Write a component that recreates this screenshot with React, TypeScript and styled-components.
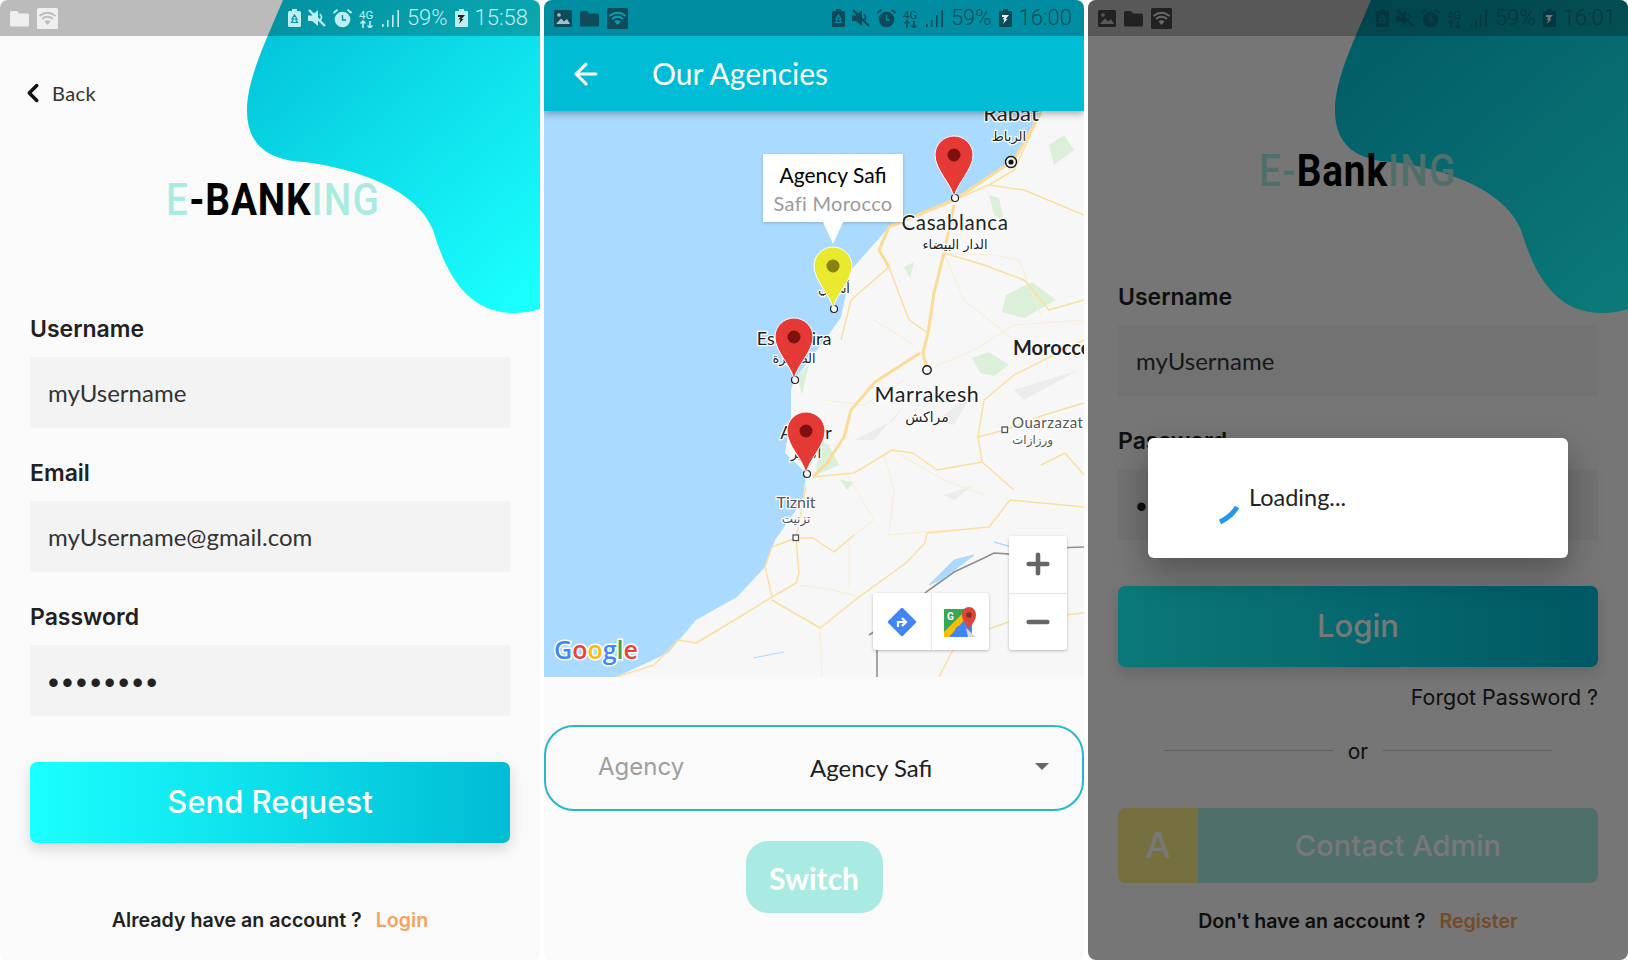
import { ChevronLeft, ArrowLeft, Plus, Minus } from "lucide-react";
import styled, { createGlobalStyle } from "styled-components";

const wideFont = `"Inter", "Open Sans", sans-serif`;
const bodyFont = `"Lato", "Noto Sans", sans-serif`;

const GlobalStyle = createGlobalStyle`
  html, body {
    margin: 0;
    background: #fff;
  }
  * {
    box-sizing: border-box;
  }
`;

const Page = styled.div`
  display: flex;
  gap: 4px;
  width: 1628px;
  height: 960px;
  overflow: hidden;
`;

const Phone = styled.section`
  position: relative;
  display: flex;
  flex-direction: column;
  width: 540px;
  height: 960px;
  flex: none;
  overflow: hidden;
  border-radius: 8px;
  background: #fafafa;
  color: #212121;
`;

const BlobArt = styled.svg`
  position: absolute;
  top: 0;
  left: 0;
`;

const Bar = styled.div<{ $fg: string; $bg?: string }>`
  position: relative;
  z-index: 2;
  display: flex;
  align-items: center;
  justify-content: space-between;
  height: 36px;
  flex: none;
  padding: 0 12px 0 10px;
  background: ${({ $bg }) => $bg || "rgba(0, 0, 0, 0.25)"};
  color: ${({ $fg }) => $fg};
`;

const BarGroup = styled.div<{ $fg: string }>`
  display: flex;
  align-items: center;
  gap: 8px;
  color: ${({ $fg }) => $fg};
`;

const BarRight = styled.div`
  display: flex;
  align-items: center;
  gap: 7px;
`;

const BarText = styled.span`
  font: 300 22px/36px "Roboto", sans-serif;
  white-space: nowrap;
`;

const Content = styled.div`
  position: relative;
  z-index: 1;
  display: flex;
  flex-direction: column;
  padding: 0 30px;
`;

const BackRow = styled.div`
  display: flex;
  align-items: center;
  gap: 4px;
  height: 40px;
  margin: 37px 0 0 -12px;
  font: 400 20px/40px "Lato", sans-serif;
  letter-spacing: 0.4px;
  color: #333;
`;

const Logo = styled.h1<{ $top: number; $shift: number }>`
  height: 50px;
  margin: ${({ $top }) => $top}px 0 0 ${({ $shift }) => $shift}px;
  font: 500 44px/50px "Roboto", sans-serif;
  letter-spacing: 1.5px;
  color: #a9ebe2;
  white-space: nowrap;
  transform: scaleX(0.88);
  transform-origin: left center;
`;

const LogoInk = styled.span`
  color: #000;
  font-weight: 700;
  letter-spacing: 1px;
`;

const Field = styled.div<{ $top: number }>`
  display: flex;
  flex-direction: column;
  gap: 14px;
  margin-top: ${({ $top }) => $top}px;
`;

const Label = styled.label`
  font: 600 23px/28px ${wideFont};
  color: #212121;
`;

const Input = styled.div`
  height: 71px;
  padding: 0 18px;
  background: #f3f3f3;
  font: 400 24px/72px ${bodyFont};
  color: #333;
`;

const Dots = styled(Input)`
  font: 400 31px/76px "Liberation Sans", sans-serif;
  letter-spacing: 3.2px;
  padding-left: 18px;
  color: #222;
`;

const GradientButton = styled.div<{ $top: number; $label?: boolean }>`
  height: 81px;
  margin-top: ${({ $top }) => $top}px;
  border-radius: 7px;
  background: linear-gradient(90deg, #1affff 0%, #00bcd4 100%);
  box-shadow: 0 6px 14px rgba(0, 0, 0, 0.14);
  font: 500 31px/80px ${wideFont};
  text-align: center;
  color: #fff;
`;

const Foot = styled.div<{ $top: number }>`
  margin-top: ${({ $top }) => $top}px;
  font: 600 19.6px/28px ${wideFont};
  text-align: center;
  white-space: nowrap;
  color: #212121;
`;

const FootLink = styled.span`
  margin-left: 14px;
  color: #f4a25d;
`;

const Forgot = styled.div`
  margin-top: 16px;
  font: 400 21.4px/28px ${wideFont};
  text-align: right;
  color: #222;
`;

const OrRow = styled.div`
  display: flex;
  align-items: center;
  justify-content: center;
  gap: 15px;
  margin-top: 27px;
  font: 400 21px/28px ${wideFont};
  color: #222;

  &::before,
  &::after {
    content: "";
    width: 169px;
    height: 1px;
    margin-top: -4px;
    background: #c8c8c8;
  }
`;

const ContactButton = styled.div`
  display: flex;
  height: 75px;
  margin-top: 42px;
  border-radius: 8px;
  overflow: hidden;
  background: #a9ebe2;
  font: 500 29px/75px ${wideFont};
  color: #fff;
`;

const ContactBadge = styled.div`
  width: 80px;
  background: #fbee88;
  font-size: 36px;
  text-align: center;
`;

const ContactText = styled.div`
  flex: 1;
  text-align: center;
`;

const Shade = styled.div`
  position: absolute;
  inset: 0;
  z-index: 5;
  background: rgba(0, 0, 0, 0.53);
`;

const Dialog = styled.div`
  position: absolute;
  top: 438px;
  left: 60px;
  z-index: 6;
  width: 420px;
  height: 120px;
  padding: 43px 0 0 101px;
  border-radius: 6px;
  background: #fff;
  box-shadow: 0 14px 34px rgba(0, 0, 0, 0.3);
  font: 400 23.5px/32px ${bodyFont};
  color: #222;
`;

const Spinner = styled.svg`
  position: absolute;
  left: 68px;
  top: 66px;
`;

const AppBar = styled.header`
  position: relative;
  z-index: 2;
  display: flex;
  align-items: center;
  gap: 49px;
  height: 75px;
  flex: none;
  padding-left: 25px;
  background: #00bcd4;
  box-shadow: 0 3px 7px rgba(0, 0, 0, 0.3);
  font: 400 30px/77px ${bodyFont};
  color: #fff;
`;

const MapArea = styled.div`
  position: relative;
  height: 566px;
  flex: none;
  overflow: hidden;
  background: #aadaff;
`;

const MapArt = styled.svg`
  display: block;
`;

const Callout = styled.div`
  position: absolute;
  top: 43px;
  left: 219px;
  width: 140px;
  height: 68px;
  background: #fff;
  box-shadow: 0 1px 3px rgba(0, 0, 0, 0.2);
  text-align: center;
  font-family: ${bodyFont};

  &::after {
    content: "";
    position: absolute;
    left: 60px;
    top: 68px;
    border: 10px solid transparent;
    border-top: 22px solid #fff;
    border-bottom: 0;
  }
`;

const CalloutTitle = styled.div`
  margin-top: 7px;
  font-size: 21px;
  line-height: 28px;
  color: #000;
`;

const CalloutSub = styled.div`
  font-size: 20px;
  line-height: 28px;
  letter-spacing: 0.3px;
  color: #9a9a9a;
`;

const MapCard = styled.div`
  position: absolute;
  display: flex;
  background: #fff;
  border-radius: 2px;
  box-shadow: 0 1px 3px rgba(0, 0, 0, 0.25);
`;

const ZoomCard = styled(MapCard)`
  left: 465px;
  top: 425px;
  flex-direction: column;
  width: 58px;
  height: 114px;
`;

const ToolCard = styled(MapCard)`
  left: 329px;
  top: 482px;
  width: 116px;
  height: 57px;
`;

const CardCell = styled.div`
  flex: 1;
  display: flex;
  align-items: center;
  justify-content: center;
  color: #666;

  & + & {
    border-left: 1px solid #e4e4e4;
  }
`;

const ZoomCell = styled(CardCell)`
  & + & {
    border-left: 0;
    border-top: 1px solid #e4e4e4;
  }
`;

const SelectBox = styled.div`
  display: flex;
  align-items: center;
  height: 86px;
  margin-top: 48px;
  padding-left: 52px;
  border: 2px solid #2ab6cf;
  border-radius: 30px;
`;

const SelectLabel = styled.div`
  width: 212px;
  margin-top: -2px;
  font: 400 24px/30px ${wideFont};
  color: #9e9e9e;
`;

const SelectValue = styled.div`
  flex: 1;
  font: 400 24px/30px ${bodyFont};
  color: #212121;
`;

const Caret = styled.div`
  width: 0;
  height: 0;
  margin: -3px 33px 0 0;
  border-left: 7px solid transparent;
  border-right: 7px solid transparent;
  border-top: 7px solid #666;
`;

const SwitchButton = styled.div`
  width: 137px;
  height: 72px;
  margin: 30px auto 0;
  border-radius: 22px;
  background: #a9ebe2;
  font: 700 30px/74px ${bodyFont};
  text-align: center;
  color: #fff;
`;

function Blob({ id }: { id: string }) {
  return (
    <BlobArt width="540" height="320" viewBox="0 0 540 320">
      <defs>
        <linearGradient id={id} x1="0.1" y1="0" x2="0.9" y2="1">
          <stop offset="0" stopColor="#03c2d8" />
          <stop offset="1" stopColor="#1affff" />
        </linearGradient>
      </defs>
      <path
        d="M283 0C264 45 247 80 247 110C247 145 268 160 304 162C345 167 415 185 433 230C445 270 465 313 514 313Q528 313 540 309L540 0Z"
        fill={`url(#${id})`}
      />
    </BlobArt>
  );
}

function FolderIcon() {
  return (
    <svg width="19" height="17" viewBox="0 0 19 17" fill="currentColor">
      <path d="M0 2.5Q0 1 1.5 1H7L9 3.5H17.5Q19 3.5 19 5V15Q19 16.5 17.5 16.5H1.5Q0 16.5 0 15Z" />
    </svg>
  );
}

function PictureIcon() {
  return (
    <svg width="18" height="17" viewBox="0 0 18 17">
      <rect width="18" height="17" rx="1.5" fill="currentColor" />
      <circle cx="5" cy="5" r="1.8" fill="#fff" fillOpacity="0.65" />
      <path d="M2 14L7 8.5L10 11.5L13 9L16 14Z" fill="#fff" fillOpacity="0.65" />
    </svg>
  );
}

function WifiBox({ wave }: { wave: string }) {
  return (
    <svg width="21" height="21" viewBox="0 0 21 21">
      <rect width="21" height="21" rx="1.5" fill="currentColor" />
      <g fill="none" stroke={wave} strokeWidth="1.8">
        <path d="M2.5 8Q10.5 1.5 18.5 8" />
        <path d="M5 11Q10.5 6.5 16 11" />
      </g>
      <path d="M7.5 13.5Q10.5 11 13.5 13.5L10.5 17Z" fill={wave} />
    </svg>
  );
}

function RecycleBattery({ hole }: { hole: string }) {
  return (
    <svg width="13" height="18" viewBox="0 0 13 18">
      <path d="M4 0H9V2H11.5Q13 2 13 3.5V16.5Q13 18 11.5 18H1.5Q0 18 0 16.5V3.5Q0 2 1.5 2H4Z" fill="currentColor" />
      <path d="M6.5 6L9 10H7.5L9.5 13.5H3.5L5.5 10H4Z" fill="none" stroke={hole} strokeWidth="1.2" />
    </svg>
  );
}

function MuteIcon() {
  return (
    <svg width="18" height="18" viewBox="0 0 18 18" fill="currentColor">
      <path d="M0 6.5H4L10 1V17L4 12H0Z" />
      <path d="M1 1L17 17" stroke="currentColor" strokeWidth="2.4" />
      <path d="M12 5Q15 9 12 11" fill="none" stroke="currentColor" strokeWidth="1.6" />
    </svg>
  );
}

function AlarmIcon({ hole }: { hole: string }) {
  return (
    <svg width="19" height="19" viewBox="0 0 19 19">
      <circle cx="9.5" cy="10.5" r="7.8" fill="currentColor" />
      <path d="M9.5 6V11H13" fill="none" stroke={hole} strokeWidth="1.4" />
      <path d="M0.5 4L4.5 0.8M18.5 4L14.5 0.8" stroke="currentColor" strokeWidth="2" />
    </svg>
  );
}

function NetIcon() {
  return (
    <svg width="16" height="19" viewBox="0 0 16 19" fill="currentColor">
      <text x="0" y="9.5" fontFamily="Roboto, sans-serif" fontSize="11.5">
        4G
      </text>
      <path d="M4 12V19M1.5 14.5L4 12L6.5 14.5M11 19V12M8.5 16.5L11 19L13.5 16.5" fill="none" stroke="currentColor" strokeWidth="1.6" />
    </svg>
  );
}

function SignalIcon() {
  return (
    <svg width="18" height="18" viewBox="0 0 18 18" fill="currentColor">
      <rect x="0" y="15" width="1.6" height="3" />
      <rect x="5" y="11" width="1.6" height="7" />
      <rect x="10" y="6" width="1.6" height="12" />
      <rect x="15.4" y="1" width="1.6" height="17" />
    </svg>
  );
}

function FlashBattery({ bolt }: { bolt: string }) {
  return (
    <svg width="13" height="18" viewBox="0 0 13 18">
      <path d="M4 0H9V2H12Q13 2 13 3V17Q13 18 12 18H1Q0 18 0 17V3Q0 2 1 2H4Z" fill="currentColor" />
      <path d="M3 6H10L6.5 10H8.5L4 15L5.5 10.5H3.5L5.5 8H3Z" fill={bolt} />
    </svg>
  );
}

interface StatusProps {
  time: string;
  fg: string;
  leftFg: string;
  hole: string;
  bolt: string;
  wave: string;
  bg?: string;
  picture?: boolean;
}

function StatusBar({ time, fg, leftFg, hole, bolt, wave, bg, picture }: StatusProps) {
  return (
    <Bar $fg={fg} $bg={bg}>
      <BarGroup $fg={leftFg}>
        {picture && <PictureIcon />}
        <FolderIcon />
        <WifiBox wave={wave} />
      </BarGroup>
      <BarRight>
        <RecycleBattery hole={hole} />
        <MuteIcon />
        <AlarmIcon hole={hole} />
        <NetIcon />
        <SignalIcon />
        <BarText>59%</BarText>
        <FlashBattery bolt={bolt} />
        <BarText>{time}</BarText>
      </BarRight>
    </Bar>
  );
}

function Pin({ x, tip, yellow }: { x: number; tip: number; yellow?: boolean }) {
  const fill = yellow ? "#e9e92f" : "#e53935";
  const dot = yellow ? "#86840c" : "#7e1010";
  return (
    <g transform={`translate(${x} ${tip})`}>
      <circle cx="1" cy="0" r="3.5" fill="#fff" stroke="#222" strokeWidth="1.2" />
      <path
        d="M0 0C-2 -14 -19 -28 -19 -43C-19 -54 -10 -62 0 -62C10 -62 19 -54 19 -43C19 -28 2 -14 0 0Z"
        fill={fill}
        stroke="#fff"
        strokeWidth="1"
      />
      <circle cx="0" cy="-43" r="6.5" fill={dot} />
    </g>
  );
}

const roadsThin = [
  "M269 477L310 473L348 450L369 453L393 470L438 462L434 437L461 430L500 415L540 403",
  "M521 453L540 475M438 462L470 490M521 453L497 465",
  "M262 487L252 538L255 573L252 583L228 597L221 567L228 547L252 538",
  "M252 538L269 538L290 552L310 535",
  "M228 597L179 627L152 643L134 640L110 665L72 677",
  "M228 600L276 628L315 597L362 563L381 543L383 533L445 527L466 500L540 507",
  "M395 677L414 640L470 620L540 613",
  "M497 113L470 170L445 185L410 200M445 185L480 190L540 215",
  "M400 253L440 265L480 280L505 310L540 300",
  "M345 267L365 320L384 333M345 267L307 300L297 340",
  "M434 437L440 400L470 375L500 360L540 340",
];

const roadsFaint = [
  "M281 400L320 405L360 380",
  "M300 470L330 520L310 535M340 455L350 490L345 535L400 530",
  "M348 450L400 480L440 495M305 540L305 590",
  "M276 628L278 677M255 585L290 590L315 597",
  "M400 253L420 300L470 340M330 320L370 345",
  "M400 253L450 255L475 260L497 315",
  "M383 370L430 350L470 325L540 320",
];

function MoroccoMap() {
  return (
    <MapArt width="540" height="566" viewBox="0 111 540 566">
      <rect x="0" y="111" width="540" height="566" fill="#aadaff" />
      <path
        d="M505 100L497 113L470 160L410 200L345 227L307 270L297 317L286 333L250 380L247 390L247 417L241 453L262 473L259 500L231 540L221 567L193 597L152 620L124 653L72 677L540 677L540 100Z"
        fill="#f7f7f7"
      />
      <g fill="#dcefd8">
        <path d="M445 195L455 198L460 222L450 215Z" />
        <path d="M505 145L520 135L530 150L510 165Z" />
        <path d="M462 295L488 282L512 300L480 318L458 312Z" />
        <path d="M428 358L445 352L465 365L450 376L436 373Z" />
        <path d="M295 465L272 475L275 440L285 445Z" />
        <path d="M296 480L310 482L303 490Z" />
        <path d="M253 375L265 365L258 395Z" />
        <path d="M360 267L370 262L366 278Z" />
      </g>
      <g fill="#ececec">
        <path d="M310 440L350 420L360 405L330 440Z" />
        <path d="M395 420L430 390L410 425Z" />
        <path d="M470 390L535 370L480 400Z" />
        <path d="M400 495L430 485L410 500Z" />
      </g>
      <g fill="none" stroke="#fbeecf" strokeWidth="1" strokeLinejoin="round">
        {roadsFaint.map((d) => (
          <path key={d} d={d} />
        ))}
      </g>
      <g fill="none" stroke="#fbdf9e" strokeWidth="1.5" strokeLinejoin="round">
        {roadsThin.map((d) => (
          <path key={d} d={d} />
        ))}
      </g>
      <path
        d="M497 113L470 160L410 200L345 227L335 250L345 267M410 205L400 253L390 293L384 333L379 353L383 370M376 353L331 382L307 410L300 437L283 463L269 477"
        fill="none"
        stroke="#fcdb96"
        strokeWidth="3"
        strokeLinejoin="round"
      />
      <path
        d="M325 635L345 622L385 590L410 572L440 558L450 553L480 555L510 548L540 547"
        fill="none"
        stroke="#8f8f8f"
        strokeWidth="1.6"
      />
      <path d="M333 650V677" stroke="#8f8f8f" strokeWidth="1.6" />
      <path d="M450 542L480 550L500 545L470 548ZM385 585L410 560L430 555L400 578ZM209 658L240 652" fill="#aadaff" stroke="#aadaff" strokeWidth="1" />
      <g
        fontFamily="'Lato', 'DejaVu Sans', sans-serif"
        fill="#222"
        textAnchor="middle"
        stroke="#fff"
        strokeWidth="2.5"
        paintOrder="stroke"
      >
        <text x="467" y="121" fontSize="22">Rabat</text>
        <text x="465" y="141" fontSize="13" fontFamily="'DejaVu Sans', sans-serif">الرباط</text>
        <text x="411" y="230" fontSize="20.5" letterSpacing="0.6">Casablanca</text>
        <text x="411" y="249" fontSize="13" fontFamily="'DejaVu Sans', sans-serif">الدار البيضاء</text>
        <text x="290" y="293" fontSize="13" fontFamily="'DejaVu Sans', sans-serif">أسفي</text>
        <text x="250" y="345" fontSize="18">Essaouira</text>
        <text x="250" y="363" fontSize="13" fontFamily="'DejaVu Sans', sans-serif">الصويرة</text>
        <text x="262" y="439" fontSize="18">Agadir</text>
        <text x="262" y="458" fontSize="13" fontFamily="'DejaVu Sans', sans-serif">أكادير</text>
        <text x="469" y="355" fontSize="20" fontWeight="700" textAnchor="start">Morocco</text>
        <text x="383" y="402" fontSize="21.5" letterSpacing="0.6">Marrakesh</text>
        <text x="383" y="422" fontSize="14" fontFamily="'DejaVu Sans', sans-serif">مراكش</text>
        <text x="468" y="428" fontSize="15" fill="#555" textAnchor="start" letterSpacing="0.5">Ouarzazate</text>
        <text x="468" y="444" fontSize="12" fill="#555" textAnchor="start" fontFamily="'DejaVu Sans', sans-serif">ورزازات</text>
        <text x="252" y="508" fontSize="16" fill="#555">Tiznit</text>
        <text x="252" y="523" fontSize="12" fill="#555" fontFamily="'DejaVu Sans', sans-serif">تزنيت</text>
      </g>
      <circle cx="467" cy="162" r="5.5" fill="#fff" stroke="#111" strokeWidth="1.4" />
      <circle cx="467" cy="162" r="2.6" fill="#111" />
      <circle cx="383" cy="370" r="4.2" fill="#fff" stroke="#111" strokeWidth="1.4" />
      <rect x="458" y="427" width="5.5" height="5.5" fill="#fff" stroke="#555" strokeWidth="1.3" />
      <rect x="249" y="535" width="5.5" height="5.5" fill="#fff" stroke="#555" strokeWidth="1.3" />
      <Pin x={410} tip={198} />
      <Pin x={289} tip={309} yellow />
      <Pin x={250} tip={380} />
      <Pin x={262} tip={474} />
      <text
        x="10"
        y="659"
        fontFamily="'Open Sans', sans-serif"
        fontSize="25"
        fontWeight="600"
        stroke="#fff"
        strokeWidth="3"
        paintOrder="stroke"
      >
        <tspan fill="#4285f4">G</tspan>
        <tspan fill="#ea4335">o</tspan>
        <tspan fill="#fbbc05">o</tspan>
        <tspan fill="#4285f4">g</tspan>
        <tspan fill="#34a853">l</tspan>
        <tspan fill="#ea4335">e</tspan>
      </text>
    </MapArt>
  );
}

function DirectionsIcon() {
  return (
    <svg width="30" height="30" viewBox="0 0 30 30">
      <rect x="4.5" y="4.5" width="21" height="21" rx="1.5" transform="rotate(45 15 15)" fill="#4285f4" />
      <path d="M11 20V15H18M15 11L19 15L15 19" fill="none" stroke="#fff" strokeWidth="2.2" />
    </svg>
  );
}

function MapsIcon() {
  return (
    <svg width="33" height="32" viewBox="0 0 33 32">
      <rect x="0" y="3" width="28" height="28" fill="#34a853" />
      <path d="M0 31L28 3V31Z" fill="#4285f4" />
      <path d="M0 26L20 6L24 10L5 31H0Z" fill="#fbbc05" />
      <path d="M18 31L11 23L14 20L26 31Z" fill="#4285f4" />
      <path d="M22 22L32 31H24Z" fill="#d8d8d8" />
      <text x="3" y="14" fontSize="10" fontFamily="Roboto, sans-serif" fontWeight="700" fill="#fff">G</text>
      <path d="M25 24C24 19 18 16 18 9C18 4 21 1 25 1C29 1 32 4 32 9C32 16 26 19 25 24Z" fill="#d8483b" />
      <circle cx="25" cy="9" r="2.8" fill="#8c2a22" />
    </svg>
  );
}

function App() {
  return (
    <Page>
      <GlobalStyle />

      <Phone>
        <Blob id="blobA" />
        <StatusBar time="15:58" fg="#bdeef2" leftFg="#efefef" hole="#0a94a6" bolt="#222" wave="#bdbdbd" />
        <Content>
          <BackRow>
            <ChevronLeft size={30} color="#111" strokeWidth={2.8} />
            Back
          </BackRow>
          <Logo $top={62} $shift={136}>
            E<LogoInk>-BANK</LogoInk>ING
          </Logo>
          <Field $top={90}>
            <Label>Username</Label>
            <Input>myUsername</Input>
          </Field>
          <Field $top={31}>
            <Label>Email</Label>
            <Input>myUsername@gmail.com</Input>
          </Field>
          <Field $top={31}>
            <Label>Password</Label>
            <Dots>••••••••</Dots>
          </Field>
          <GradientButton $top={46}>Send Request</GradientButton>
          <Foot $top={63}>
            Already have an account ?<FootLink>Login</FootLink>
          </Foot>
        </Content>
      </Phone>

      <Phone>
        <StatusBar time="16:00" fg="#0c4a59" leftFg="#0e4c5c" hole="#008da2" bolt="#e6f7f9" wave="#0aa0b4" bg="#008da2" picture />
        <AppBar>
          <ArrowLeft size={34} strokeWidth={2.2} />
          Our Agencies
        </AppBar>
        <MapArea>
          <MoroccoMap />
          <Callout>
            <CalloutTitle>Agency Safi</CalloutTitle>
            <CalloutSub>Safi Morocco</CalloutSub>
          </Callout>
          <ToolCard>
            <CardCell>
              <DirectionsIcon />
            </CardCell>
            <CardCell>
              <MapsIcon />
            </CardCell>
          </ToolCard>
          <ZoomCard>
            <ZoomCell>
              <Plus size={32} strokeWidth={3.4} />
            </ZoomCell>
            <ZoomCell>
              <Minus size={32} strokeWidth={3.4} />
            </ZoomCell>
          </ZoomCard>
        </MapArea>
        <SelectBox>
          <SelectLabel>Agency</SelectLabel>
          <SelectValue>Agency Safi</SelectValue>
          <Caret />
        </SelectBox>
        <SwitchButton>Switch</SwitchButton>
      </Phone>

      <Phone>
        <Blob id="blobB" />
        <StatusBar time="16:01" fg="#0a7483" leftFg="#4a4a4a" hole="#0a94a6" bolt="#fff" wave="#e0e0e0" picture />
        <Content>
          <Logo $top={110} $shift={141}>
            E-<LogoInk>Bank</LogoInk>ING
          </Logo>
          <Field $top={87}>
            <Label>Username</Label>
            <Input>myUsername</Input>
          </Field>
          <Field $top={31}>
            <Label>Password</Label>
            <Dots>••••••••</Dots>
          </Field>
          <GradientButton $top={46}>Login</GradientButton>
          <Forgot>Forgot Password ?</Forgot>
          <OrRow>or</OrRow>
          <ContactButton>
            <ContactBadge>A</ContactBadge>
            <ContactText>Contact Admin</ContactText>
          </ContactButton>
          <Foot $top={24}>
            Don't have an account ?<FootLink>Register</FootLink>
          </Foot>
        </Content>
        <Shade />
        <Dialog>
          <Spinner width="24" height="24" viewBox="0 0 24 24">
            <path d="M21 3Q16 12 4 18" fill="none" stroke="#2196f3" strokeWidth="5" />
          </Spinner>
          Loading...
        </Dialog>
      </Phone>
    </Page>
  );
}

export default App;
